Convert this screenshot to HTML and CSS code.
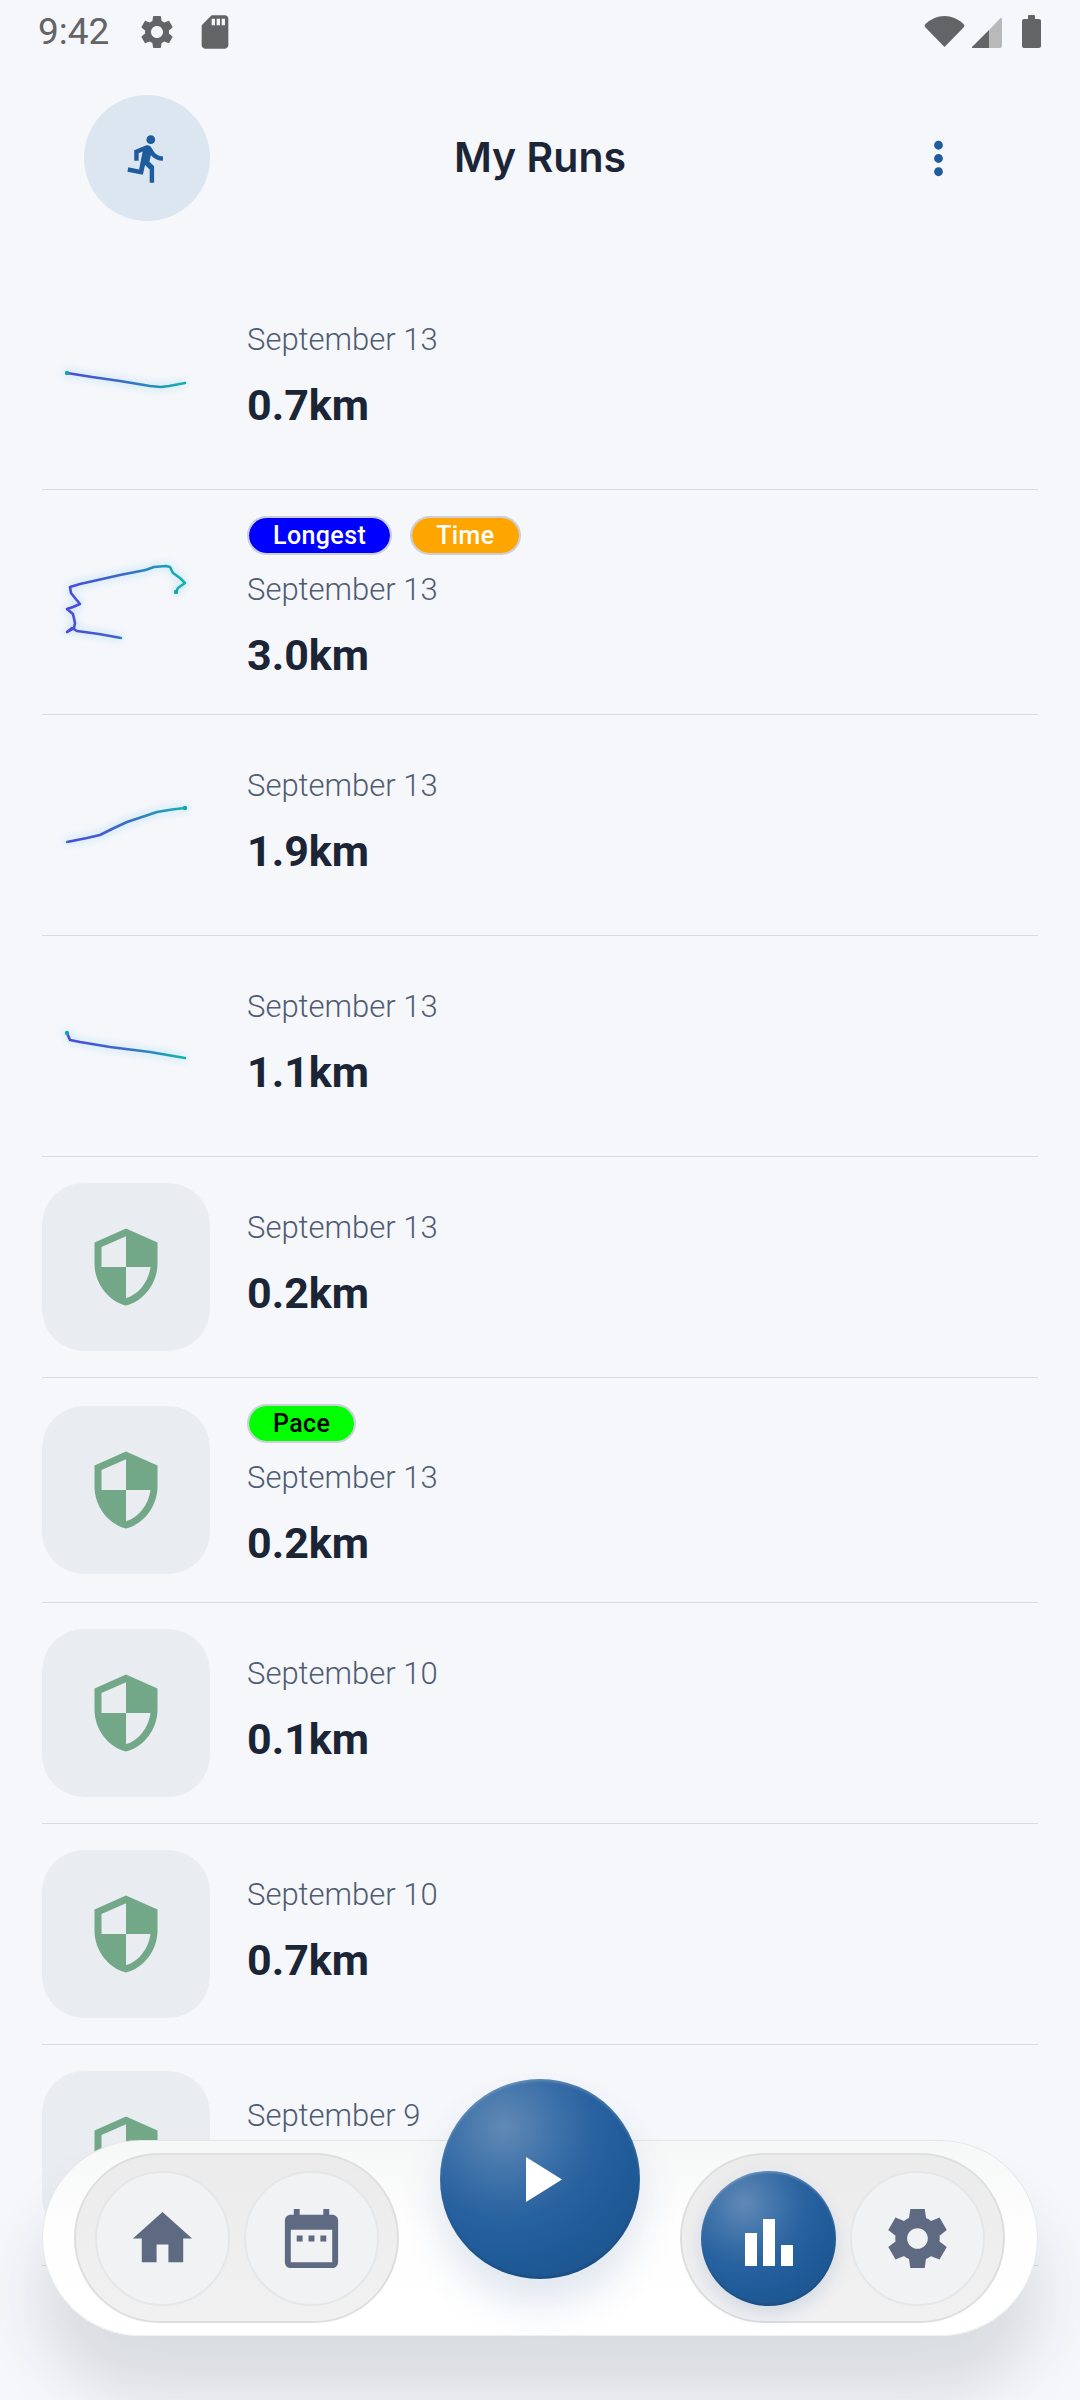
FILE: index.html
```html
<!DOCTYPE html>
<html lang="en">
<head>
<meta charset="utf-8">
<title>My Runs</title>
<link rel="stylesheet" href="styles.css">
</head>
<body>
<div class="page">
  <div class="status">
    <span class="time">9:42</span>
    <svg class="st-icon st-gear" viewBox="0 0 24 24"><path d="M19.14 12.94c.04-.3.06-.61.06-.94 0-.32-.02-.64-.07-.94l2.03-1.58c.18-.14.23-.41.12-.61l-1.92-3.32c-.12-.22-.37-.29-.59-.22l-2.39.96c-.5-.38-1.03-.7-1.62-.94l-.36-2.54c-.04-.24-.24-.41-.48-.41h-3.84c-.24 0-.43.17-.47.41l-.36 2.54c-.59.24-1.13.57-1.62.94l-2.39-.96c-.22-.08-.47 0-.59.22L2.74 8.87c-.12.21-.08.47.12.61l2.03 1.58c-.05.3-.09.63-.09.94s.02.64.07.94l-2.03 1.58c-.18.14-.23.41-.12.61l1.92 3.32c.12.22.37.29.59.22l2.39-.96c.5.38 1.03.7 1.62.94l.36 2.54c.05.24.24.41.48.41h3.84c.24 0 .44-.17.47-.41l.36-2.54c.59-.24 1.13-.56 1.62-.94l2.39.96c.22.08.47 0 .59-.22l1.92-3.32c.12-.22.07-.47-.12-.61l-2.01-1.58zM12 15.6c-1.98 0-3.6-1.62-3.6-3.6s1.62-3.6 3.6-3.6 3.6 1.62 3.6 3.6-1.62 3.6-3.6 3.6z"/></svg>
    <svg class="st-icon st-sd" viewBox="0 0 24 24"><path d="M18 2h-8L4.02 8 4 20c0 1.1.9 2 2 2h12c1.1 0 2-.9 2-2V4c0-1.1-.9-2-2-2zm-6 6h-2V4h2v4zm3 0h-2V4h2v4zm3 0h-2V4h2v4z"/></svg>
    <span class="st-spacer"></span>
    <svg class="st-wifi" viewBox="0 0 41 31"><path d="M20.500 31 L1 11 Q0 9.500 1.500 8 Q10 0 20.500 0 Q31 0 39.500 8 Q41 9.500 40 11 Z"/></svg>
    <svg class="st-signal" viewBox="0 0 31 31"><path class="sig-light" d="M31 2 Q31 0 29 1.500 L18 13 V31 H29 Q31 31 31 29 Z"/><path d="M18 13 L1 30 Q0 31 2 31 H18 Z"/></svg>
    <svg class="st-battery" viewBox="0 0 19 33"><path d="M6 4 V1 Q6 0 7 0 H12 Q13 0 13 1 V4 H17 Q19 4 19 6 V31 Q19 33 17 33 H2 Q0 33 0 31 V6 Q0 4 2 4 Z"/></svg>
  </div>

  <header class="head">
    <div class="avatar">
      <svg class="run-icon" viewBox="0 0 24 24"><path d="M13.49 5.48c1.1 0 2-.9 2-2s-.9-2-2-2-2 .9-2 2 .9 2 2 2zm-3.6 13.9l1-4.4 2.1 2v6h2v-7.500l-2.100-2 .6-3c1.300 1.500 3.300 2.500 5.500 2.500v-2c-1.900 0-3.500-1-4.300-2.400l-1-1.600c-.4-.6-1-1-1.700-1-.3 0-.5.1-.8.1l-5.200 2.200v4.700h2v-3.400l1.800-.7-1.600 8.100-4.900-1-.4 2 7 1.400z"/></svg>
    </div>
    <h1 class="title">My Runs</h1>
    <div class="menu">
      <svg class="menu-icon" viewBox="0 0 24 24"><path d="M12 8c1.100 0 2-.9 2-2s-.9-2-2-2-2 .9-2 2 .9 2 2 2zm0 2c-1.100 0-2 .9-2 2s.9 2 2 2 2-.9 2-2-.9-2-2-2zm0 6c-1.100 0-2 .9-2 2s.9 2 2 2 2-.9 2-2-.9-2-2-2z"/></svg>
    </div>
  </header>

  <main class="list">
    <div class="row">
      <div class="thumb">
        <svg class="route" viewBox="0 0 168 168"><defs><linearGradient id="g1" gradientUnits="userSpaceOnUse" x1="25" y1="0" x2="143" y2="0"><stop offset="0" stop-color="#4e48dc"/><stop offset="0.5" stop-color="#3a6cc8"/><stop offset="1" stop-color="#12b4ae"/></linearGradient></defs><polyline class="line" stroke="url(#g1)" points="25,78 50,82 78,86 96,89 108,91 119,92 127,91 135,89.500 143,88"/><circle class="start" cx="25" cy="78" r="2.200"/><circle class="start" cx="143" cy="88" r="1"/></svg>
      </div>
      <div class="info"><div class="date">September 13</div><div class="dist">0.7km</div></div>
    </div>

    <div class="row">
      <div class="thumb">
        <svg class="route" viewBox="0 0 168 168"><defs><linearGradient id="g2" gradientUnits="userSpaceOnUse" x1="25" y1="0" x2="143" y2="0"><stop offset="0" stop-color="#4e48dc"/><stop offset="0.5" stop-color="#3a6cc8"/><stop offset="1" stop-color="#12b4ae"/></linearGradient></defs><polyline class="line" stroke="url(#g2)" points="134,74 136,70 143,65 138,60 131,55 128,49 124,48 112,49 103.500,52 78,57 38,66 28,69 29,75 33,80 38,86 31,89 25,91 31,96 33,105 32,110 25,114 30,110 35,113 57,116 79,120"/><circle class="start" cx="134" cy="74" r="2.200"/><circle class="start" cx="79" cy="120" r="1"/></svg>
      </div>
      <div class="info">
        <div class="badges"><span class="badge badge-blue">Longest</span><span class="badge badge-orange">Time</span></div>
        <div class="date">September 13</div><div class="dist">3.0km</div>
      </div>
    </div>

    <div class="row">
      <div class="thumb">
        <svg class="route" viewBox="0 0 168 168"><defs><linearGradient id="g3" gradientUnits="userSpaceOnUse" x1="25" y1="0" x2="143" y2="0"><stop offset="0" stop-color="#4e48dc"/><stop offset="0.5" stop-color="#3a6cc8"/><stop offset="1" stop-color="#12b4ae"/></linearGradient></defs><polyline class="line" stroke="url(#g3)" points="25,101 45,97 58,94 70,88 85,81 100,76 115,71 130,68.500 143,67"/><circle class="start" cx="143" cy="67" r="2.200"/><circle class="start" cx="25" cy="101" r="1"/></svg>
      </div>
      <div class="info"><div class="date">September 13</div><div class="dist">1.9km</div></div>
    </div>

    <div class="row">
      <div class="thumb">
        <svg class="route" viewBox="0 0 168 168"><defs><linearGradient id="g4" gradientUnits="userSpaceOnUse" x1="25" y1="0" x2="143" y2="0"><stop offset="0" stop-color="#4e48dc"/><stop offset="0.5" stop-color="#3a6cc8"/><stop offset="1" stop-color="#12b4ae"/></linearGradient></defs><polyline class="line" stroke="url(#g4)" points="25,71 28,78 38,80 68,85 108,90 143,96"/><circle class="start" cx="25" cy="71" r="2.200"/><circle class="start" cx="143" cy="96" r="1"/></svg>
      </div>
      <div class="info"><div class="date">September 13</div><div class="dist">1.1km</div></div>
    </div>

    <div class="row">
      <div class="thumb thumb-safe"><svg class="shield" viewBox="0 0 24 24"><path d="M12 1L3 5v6c0 5.550 3.840 10.740 9 12 5.160-1.260 9-6.450 9-12V5l-9-4zm0 10.990h7c-.53 4.120-3.280 7.790-7 8.940V12H5V6.300l7-3.110v8.800z"/></svg></div>
      <div class="info"><div class="date">September 13</div><div class="dist">0.2km</div></div>
    </div>

    <div class="row">
      <div class="thumb thumb-safe"><svg class="shield" viewBox="0 0 24 24"><path d="M12 1L3 5v6c0 5.550 3.840 10.740 9 12 5.160-1.260 9-6.450 9-12V5l-9-4zm0 10.990h7c-.53 4.120-3.280 7.790-7 8.940V12H5V6.300l7-3.110v8.800z"/></svg></div>
      <div class="info">
        <div class="badges"><span class="badge badge-green">Pace</span></div>
        <div class="date">September 13</div><div class="dist">0.2km</div>
      </div>
    </div>

    <div class="row">
      <div class="thumb thumb-safe"><svg class="shield" viewBox="0 0 24 24"><path d="M12 1L3 5v6c0 5.550 3.840 10.740 9 12 5.160-1.260 9-6.450 9-12V5l-9-4zm0 10.990h7c-.53 4.120-3.280 7.790-7 8.940V12H5V6.300l7-3.110v8.800z"/></svg></div>
      <div class="info"><div class="date">September 10</div><div class="dist">0.1km</div></div>
    </div>

    <div class="row">
      <div class="thumb thumb-safe"><svg class="shield" viewBox="0 0 24 24"><path d="M12 1L3 5v6c0 5.550 3.840 10.740 9 12 5.160-1.260 9-6.450 9-12V5l-9-4zm0 10.990h7c-.53 4.120-3.280 7.790-7 8.940V12H5V6.300l7-3.110v8.800z"/></svg></div>
      <div class="info"><div class="date">September 10</div><div class="dist">0.7km</div></div>
    </div>

    <div class="row">
      <div class="thumb thumb-safe"><svg class="shield" viewBox="0 0 24 24"><path d="M12 1L3 5v6c0 5.550 3.840 10.740 9 12 5.160-1.260 9-6.450 9-12V5l-9-4zm0 10.990h7c-.53 4.120-3.280 7.790-7 8.940V12H5V6.300l7-3.110v8.800z"/></svg></div>
      <div class="info"><div class="date">September 9</div><div class="dist">0.4km</div></div>
    </div>
  </main>

  <nav class="nav">
    <div class="group">
      <div class="nav-btn"><svg class="nav-icon" viewBox="0 0 24 24"><path d="M10 20v-6h4v6h5v-8h3L12 3 2 12h3v8z"/></svg></div>
      <div class="nav-btn"><svg class="nav-icon" viewBox="0 0 24 24"><path d="M19 4h-1V2h-2v2H8V2H6v2H5c-1.100 0-2 .9-2 2v14c0 1.100.9 2 2 2h14c1.100 0 2-.9 2-2V6c0-1.100-.9-2-2-2zm0 16H5V9h14v11z"/><path d="M7 11h2v2H7zm4 0h2v2h-2zm4 0h2v2h-2z"/></svg></div>
    </div>
    <div class="group">
      <div class="nav-btn nav-btn-active"><svg class="bars-icon" viewBox="0 0 48 47"><path d="M0 14h12v33H0zM18 0h12v47H18zM36 26h12v21H36z"/></svg></div>
      <div class="nav-btn"><svg class="nav-icon" viewBox="0 0 24 24"><path d="M19.440 12.990l-.01.02c.04-.33.08-.67.08-1.010 0-.34-.03-.66-.07-.99l.01.02 2.440-1.920-2.430-4.220-2.870 1.160.01.01c-.52-.4-1.090-.74-1.710-1h.01L14.440 2H9.570l-.44 3.070h.01c-.62.26-1.190.6-1.710 1l.01-.01-2.880-1.170-2.440 4.220 2.440 1.920.01-.02c-.04.33-.07.65-.07.99 0 .34.03.68.08 1.010l-.01-.02-2.100 1.650-.33.26 2.430 4.200 2.880-1.150-.02-.04c.53.41 1.100.75 1.730 1.010h-.03L9.580 22h4.850s.03-.18.06-.42l.38-2.650h-.01c.62-.26 1.200-.6 1.730-1.010l-.02.04 2.880 1.150 2.430-4.200s-.14-.12-.33-.26l-2.110-1.660zM12 15.500c-1.930 0-3.500-1.570-3.500-3.500s1.570-3.500 3.500-3.500 3.500 1.570 3.500 3.500-1.570 3.500-3.500 3.500z"/></svg></div>
    </div>
    <div class="fab"><svg class="play" viewBox="0 0 36 45"><path d="M0 0 L36 22.500 L0 45 Z"/></svg></div>
  </nav>
</div>
</body>
</html>
```
FILE: styles.css
```css
* { box-sizing: border-box; }
html, body { margin: 0; padding: 0; }
body { background: #f5f7fb; font-family: "Roboto", sans-serif; }
.page { position: relative; width: 1080px; height: 2400px; overflow: hidden; background: #f5f7fb; }

.status { height: 63px; display: flex; align-items: center; padding: 0 39px 0 38px; fill: #636466; }
.time { font-size: 37px; color: #636466; line-height: 63px; width: 99px; }
.st-icon { width: 40px; height: 40px; display: block; }
.st-sd { margin-left: 18px; }
.st-spacer { flex: 1; }
.st-wifi { width: 41px; height: 31px; margin-left: 0; }
.st-signal { width: 31px; height: 31px; margin-left: 6px; margin-top: 2px; }
.sig-light { fill: #b9b9b9; }
.st-battery { width: 19px; height: 33px; margin-left: 20px; }

.head { display: grid; grid-template-columns: 1fr auto 1fr; align-items: center; padding: 32px 84px 48px; }
.avatar { width: 126px; height: 126px; border-radius: 50%; background: #dce6f0; display: flex; align-items: center; justify-content: center; fill: #1f5c9e; }
.run-icon { width: 53px; height: 53px; display: block; }
.title { margin: 0 0 2px; font-family: "Inter", sans-serif; font-size: 41px; font-weight: 600; color: #1c2536; }
.menu { justify-self: end; padding-right: 31px; fill: #1f5c9e; }
.menu-icon { width: 53px; height: 53px; display: block; }

.list { padding: 0 42px; }
.row { display: flex; align-items: center; gap: 37px; padding: 26px 0; border-bottom: 1px solid #d8dce2; }
.thumb { width: 168px; height: 168px; flex: none; border-radius: 42px; display: flex; align-items: center; justify-content: center; }
.thumb-safe { background: #e9ecf1; fill: #72a888; }
.shield { width: 84px; height: 84px; display: block; }
.route { width: 168px; height: 168px; display: block; filter: drop-shadow(0 0 4px rgba(90, 190, 225, 0.6)); }
.line { fill: none; stroke-width: 2.6; stroke-linejoin: round; stroke-linecap: round; }
.start { fill: #12a8aa; }

.info { display: flex; flex-direction: column; height: 118px; justify-content: flex-start; }
.row:has(.badges) .info { height: 172px; }
.badges { display: flex; gap: 18px; height: 39px; margin-bottom: 15px; }
.badge { height: 39px; padding: 0 24px; border-radius: 20px; display: flex; align-items: center; font-size: 25px; font-weight: 500; letter-spacing: 0.4px; background-clip: padding-box; border: 2px solid rgba(170, 175, 190, 0.55); }
.badge-blue { background-color: #0000ff; color: #fff; }
.badge-orange { background-color: #ffa500; color: #fff; }
.badge-green { background-color: #00ff00; color: #000; }
.date { font-size: 31px; font-weight: 300; color: #505c72; line-height: 40px; }
.dist { font-size: 43px; font-weight: 700; color: #1c2536; line-height: 50px; margin-top: 20px; }

.nav { position: absolute; left: 42px; top: 2140px; width: 996px; height: 196px; border-radius: 98px; display: flex; justify-content: space-between; align-items: center; padding: 0 32px 0 31px; background: linear-gradient(180deg, #f6f7f7 0%, #fefefe 45%, #ffffff 100%); border: 1px solid #e4e6e9; border-bottom-color: #eef0f2; box-shadow: 0 56px 60px 4px rgba(40, 46, 60, 0.13); }
.group { height: 170px; display: flex; align-items: center; gap: 14px; padding: 0 18px 0 19px; border-radius: 85px; background: linear-gradient(180deg, #ebebec 0%, #f1f1f2 100%); border: 2px solid #dcdee0; }
.nav-btn { width: 135px; height: 135px; border-radius: 50%; background: #f1f2f3; border: 2px solid #e5e6e8; display: flex; align-items: center; justify-content: center; fill: #5e6a82; }
.nav-icon { width: 71px; height: 71px; display: block; }
.nav-btn-active { border: none; background: radial-gradient(circle at 32% 24%, #6189b6 0%, #3b70a8 28%, #28619f 46%, #1f5b98 65%, #1d5088 100%); box-shadow: 0 8px 18px rgba(30, 80, 140, 0.14), inset 0 2px 2px rgba(255, 255, 255, 0.2), inset 0 -2px 2px rgba(0, 0, 0, 0.12); fill: #fff; }
.bars-icon { width: 48px; height: 47px; display: block; margin-top: 8px; }
.fab { position: absolute; left: 397px; top: -62px; width: 200px; height: 200px; border-radius: 50%; background: radial-gradient(circle at 32% 24%, #6189b6 0%, #3b70a8 28%, #28619f 46%, #1f5b98 65%, #1d5088 100%); box-shadow: 0 24px 40px rgba(30, 80, 140, 0.14), inset 0 2px 3px rgba(255, 255, 255, 0.2), inset 0 -2px 3px rgba(0, 0, 0, 0.14); display: flex; align-items: center; justify-content: center; fill: #fff; }
.play { width: 36px; height: 45px; display: block; margin-left: 8px; }
```
